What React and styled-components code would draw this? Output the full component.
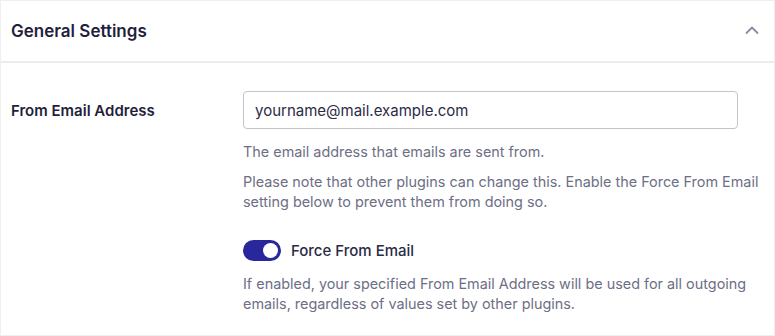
import React from "react";
import styled, { createGlobalStyle } from "styled-components";

const Global = createGlobalStyle`
  html, body { margin: 0; padding: 0; background: #ffffff; }
  * { box-sizing: border-box; }
  body { font-family: Inter, "Noto Sans", sans-serif; }
`;

const Panel = styled.section`
  width: 775px;
  height: 336px;
  border: 1px solid #efeff1;
  background: #fff;
  overflow: hidden;
`;

const Header = styled.header`
  height: 62px;
  display: flex;
  align-items: center;
  justify-content: space-between;
  padding: 0 10px 1px 10px;
  border-bottom: 2px solid #ececee;
`;

const Title = styled.h2`
  margin: 0;
  font-size: 17px;
  font-weight: 600;
  color: #1f1f3d;
`;

const Chevron = styled.svg`
  width: 16px;
  height: 16px;
  margin-right: 4px;
  margin-top: -2px;
`;

const Body = styled.div`
  display: grid;
  grid-template-columns: 232px 527px;
  padding: 27px 0 0 10px;
`;

const Label = styled.div`
  font-size: 15px;
  font-weight: 600;
  color: #1f1f3d;
  height: 39px;
  display: flex;
  align-items: center;
  padding-top: 1px;
`;

const Field = styled.div`
  display: flex;
  flex-direction: column;
`;

const Input = styled.input`
  width: 495px;
  height: 38px;
  margin-top: 1px;
  border: 1px solid #c3c3cb;
  border-radius: 4px;
  padding: 0 11px;
  font-family: Inter, "Noto Sans", sans-serif;
  font-size: 15px;
  color: #2b2b45;
  outline: none;
`;

const Desc = styled.p`
  margin: ${(p) => p.$top}px 0 0 0;
  font-size: 14.4px;
  line-height: 20px;
  color: #6d6f85;
`;

const ToggleRow = styled.label`
  display: flex;
  align-items: center;
  gap: 10px;
  margin-top: 28px;
  height: 21px;
`;

const Track = styled.span`
  width: 38px;
  height: 21px;
  border-radius: 11px;
  background: #2a269c;
  display: flex;
  align-items: center;
  justify-content: ${(p) => (p.$on ? "flex-end" : "flex-start")};
  padding: 0 3px;
`;

const Knob = styled.span`
  width: 15px;
  height: 15px;
  border-radius: 50%;
  background: #fff;
`;

const ToggleText = styled.span`
  font-size: 15px;
  font-weight: 500;
  color: #2b2b45;
`;

export default function App() {
  return (
    <>
      <Global />
      <Panel>
        <Header>
          <Title>General Settings</Title>
          <Chevron viewBox="0 0 16 16" fill="none">
            <path d="M2.5 11 L8 5.5 L13.5 11" stroke="#8b8ca0" strokeWidth="1.8" strokeLinecap="round" strokeLinejoin="round" />
          </Chevron>
        </Header>
        <Body>
          <Label>From Email Address</Label>
          <Field>
            <Input defaultValue="yourname@mail.example.com" readOnly />
            <Desc $top={13}>The email address that emails are sent from.</Desc>
            <Desc $top={10}>
              Please note that other plugins can change this. Enable the Force From Email setting below to prevent them from doing so.
            </Desc>
            <ToggleRow>
              <Track $on>
                <Knob />
              </Track>
              <ToggleText>Force From Email</ToggleText>
            </ToggleRow>
            <Desc $top={13}>
              If enabled, your specified From Email Address will be used for all outgoing emails, regardless of values set by other plugins.
            </Desc>
          </Field>
        </Body>
      </Panel>
    </>
  );
}
